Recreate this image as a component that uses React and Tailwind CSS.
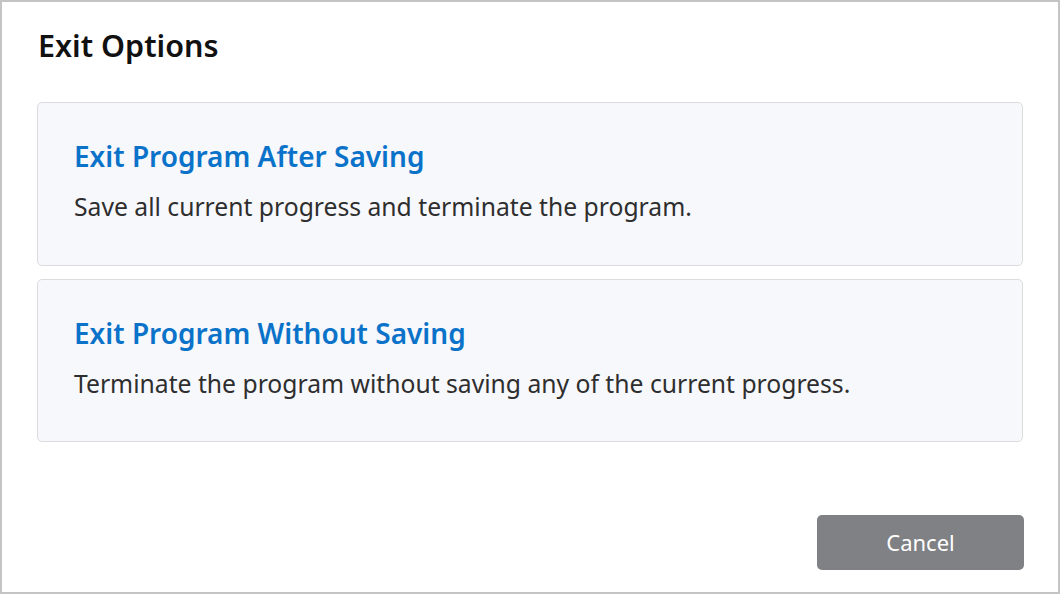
export default function App() {
  return (
    <div className="w-[1060px] h-[594px] bg-white border-2 border-[#c4c4c4] flex flex-col" style={{ fontFamily: '"Noto Sans", "Open Sans", sans-serif' }}>
      <div className="pl-[36px] pt-[28px] text-[30.5px] font-semibold text-[#111] leading-[30px]">Exit Options</div>
      <div className="flex flex-col gap-[13px] px-[35px] mt-[42px]">
        <div className="h-[164px] rounded-[5px] border border-[#dcdcdf] bg-[#f7f8fc] pl-[36px] pt-[39px]">
          <div className="text-[28px] font-semibold text-[#0a73c9] leading-[28px]">Exit Program After Saving</div>
          <div className="text-[24.7px] text-[#2e2e2e] mt-[24px] leading-[25px]">Save all current progress and terminate the program.</div>
        </div>
        <div className="h-[163px] rounded-[5px] border border-[#dcdcdf] bg-[#f7f8fc] pl-[36px] pt-[39px]">
          <div className="text-[28px] font-semibold text-[#0a73c9] leading-[28px]">Exit Program Without Saving</div>
          <div className="text-[24.7px] text-[#2e2e2e] mt-[24px] leading-[25px]">Terminate the program without saving any of the current progress.</div>
        </div>
      </div>
      <div className="flex-1" />
      <div className="flex justify-end px-[34px] pb-[22px]">
        <button className="w-[207px] h-[55px] rounded-[5px] bg-[#808184] text-white text-[22px]">Cancel</button>
      </div>
    </div>
  );
}
